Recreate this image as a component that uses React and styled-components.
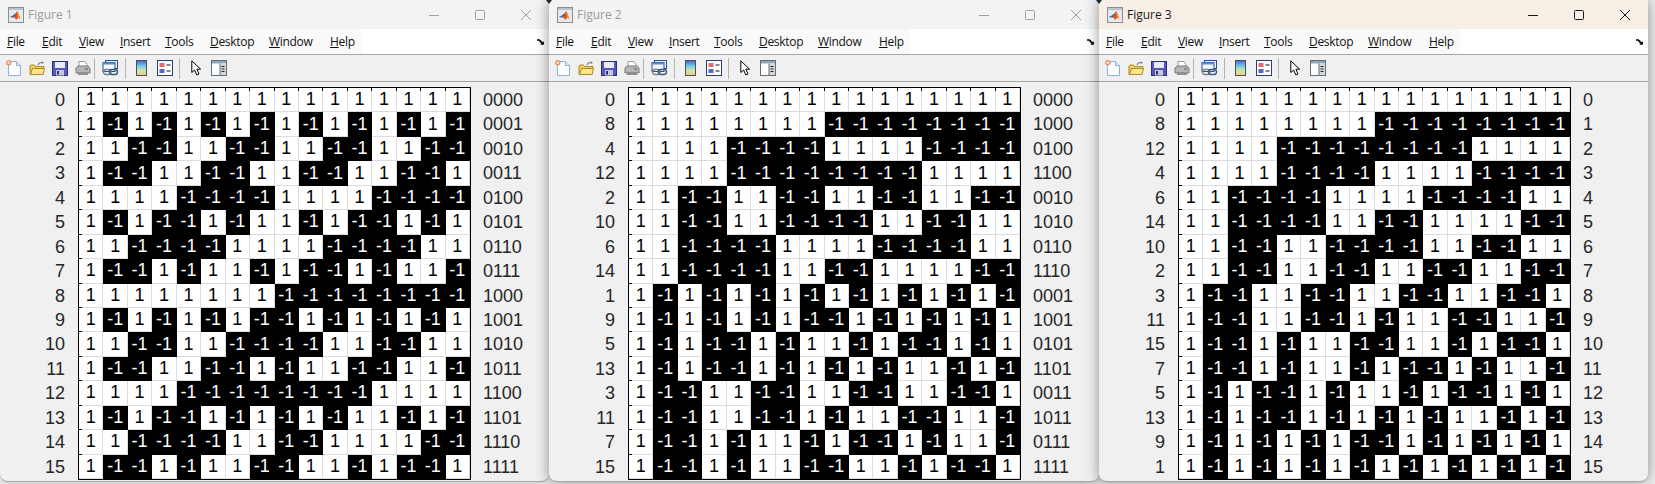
import React from "react";
import styled, { createGlobalStyle } from "styled-components";

const GlobalStyle = createGlobalStyle`
  html, body {
    margin: 0;
    padding: 0;
    background: #eeeff0;
  }
`;

const MENU = ["File", "Edit", "View", "Insert", "Tools", "Desktop", "Window", "Help"];
const pad = (n) => n.toString(2).padStart(4, "0");
const bits = (n) => n.toString(2).replace(/0/g, "").length;
const walsh = (i, j) => (bits(i & j) % 2 ? -1 : 1);

const NATURAL = [0, 1, 2, 3, 4, 5, 6, 7, 8, 9, 10, 11, 12, 13, 14, 15];
const DYADIC = [0, 8, 4, 12, 2, 10, 6, 14, 1, 9, 5, 13, 3, 11, 7, 15];
const SEQUENCY = [0, 8, 12, 4, 6, 14, 10, 2, 3, 11, 15, 7, 5, 13, 9, 1];

const FIGURES = [
  { id: 1, width: 549, labelW: 65, rows: NATURAL, right: (r) => pad(r) },
  { id: 2, width: 550, labelW: 66, rows: DYADIC, right: (r) => pad(r) },
  { id: 3, width: 549, labelW: 66, rows: SEQUENCY, right: (r, idx) => String(idx), active: true },
];

const Desktop = styled.div`
  display: flex;
  align-items: flex-start;
  width: 1655px;
  height: 484px;
  overflow: hidden;
  font-family: "Liberation Sans", Arial, sans-serif;
`;
const Win = styled.div`
  position: relative;
  z-index: ${(p) => p.$z};
  flex: none;
  display: flex;
  flex-direction: column;
  width: ${(p) => p.$w}px;
  height: 482px;
  box-sizing: border-box;
  background: #f0f0f0;
  border-bottom: 1px solid #a8a8a8;
  border-radius: 0 0 8px 8px;
  box-shadow: ${(p) => (p.$first ? "0 0 6px rgba(0,0,0,.25)" : "0 0 14px rgba(0,0,0,.42)")};
`;
const TitleBar = styled.div`
  display: flex;
  align-items: center;
  height: 29px;
  flex: none;
  padding-left: 8px;
  background: ${(p) => (p.$active ? "#f7efe6" : "#f3f3f3")};
`;
const TitleText = styled.span`
  margin-left: 4px;
  font-family: "Open Sans", sans-serif;
  font-size: 12px;
  color: ${(p) => (p.$active ? "#1a1a1a" : "#9a9a9a")};
`;
const Controls = styled.div`
  margin-left: auto;
  display: flex;
  align-items: center;
  padding-right: 18px;
  gap: 36px;
`;
const MenuBar = styled.div`
  display: flex;
  align-items: center;
  justify-content: space-between;
  height: 25px;
  flex: none;
  background: #fff;
  border-bottom: 1px solid #a6a6a6;
`;
const MenuList = styled.div`
  display: grid;
  grid-template-columns: 35px 37px 41px 45px 45px 59px 61px 31px;
  align-items: center;
  height: 100%;
  padding-left: 7px;
  background: #f9f9f9;
`;
const MenuItem = styled.span`
  font-family: "Open Sans", sans-serif;
  font-size: 12px;
  color: #111;
  letter-spacing: -0.3px;
  &::first-letter {
    text-decoration: underline;
  }
`;
const DockIcon = styled.svg`
  margin-right: 4px;
`;
const ToolBar = styled.div`
  display: flex;
  align-items: center;
  height: 26px;
  flex: none;
  padding-left: 2px;
  background: #f0f0f0;
  border-bottom: 1px solid #a6a6a6;
`;
const ToolSlot = styled.div`
  width: ${(p) => p.$w || 23}px;
  display: flex;
  justify-content: center;
`;
const ToolSep = styled.div`
  width: 1px;
  height: 21px;
  margin: 0 ${(p) => p.$r}px 0 ${(p) => p.$l}px;
  background: #b4b4b4;
`;
const Content = styled.div`
  display: flex;
  padding-top: 5px;
`;
const RowLabels = styled.div`
  display: grid;
  grid-template-rows: repeat(16, 24.44px);
  width: ${(p) => p.$w}px;
  margin-right: 13px;
  margin-top: 1px;
  text-align: right;
`;
const SideLabels = styled.div`
  display: grid;
  grid-template-rows: repeat(16, 24.44px);
  margin-left: 12px;
  margin-top: 1px;
`;
const Label = styled.div`
  font-size: 18px;
  line-height: 24.44px;
  color: #262626;
`;
const Matrix = styled.div`
  display: grid;
  grid-template-columns: repeat(16, 24.44px);
  grid-template-rows: repeat(16, 24.44px);
  width: 391px;
  height: 391px;
  background: #fff;
  border: 1px solid #000;
`;
const Cell = styled.div`
  position: relative;
  display: flex;
  align-items: center;
  justify-content: center;
  box-sizing: border-box;
  font-size: 18px;
  background: ${(p) => (p.$neg ? "#000" : "#fff")};
  color: ${(p) => (p.$neg ? "#fff" : "#000")};
  border-right: 1px solid ${(p) => (p.$neg ? "#000" : "#dcdcdc")};
  border-bottom: 1px solid ${(p) => (p.$neg ? "#000" : "#dcdcdc")};
  ${(p) =>
    p.$top &&
    `&::before { content: ""; position: absolute; top: 0; right: -1px; width: 1px; height: 3px; background: #000; }`}
  ${(p) =>
    p.$left &&
    `&::after { content: ""; position: absolute; left: 0; bottom: -1px; width: 3px; height: 1px; background: #000; }`}
`;
const Notch = styled.div`
  position: absolute;
  top: 0;
  left: -3px;
  width: 0;
  height: 0;
  border-left: 3px solid transparent;
  border-right: 3px solid transparent;
  border-top: 4px solid #1c2a3a;
`;

const Logo = () => (
  <svg width="16" height="16" viewBox="0 0 16 16">
    <rect x="0.5" y="0.5" width="15" height="15" fill="#e6e9f0" stroke="#8d8d8d" />
    <rect x="1" y="1" width="14" height="2" fill="#b9c3d3" />
    <path d="M2 10l3-1.6 2-1.6L9.3 4 12.5 12 10.4 10.6 8.3 13 6.3 10.4z" fill="#e2561b" />
    <path d="M2 10l3-1.6 2-1.6 1 1.2-2 2.4z" fill="#2f6fb6" />
    <path d="M9.3 4l3.2 8-2.1-1.4L9.4 6.6z" fill="#f3a028" />
  </svg>
);
const MinGlyph = ({ c }) => (
  <svg width="10" height="10" viewBox="0 0 10 10">
    <path d="M0 5.5h10" stroke={c} fill="none" />
  </svg>
);
const MaxGlyph = ({ c }) => (
  <svg width="10" height="10" viewBox="0 0 10 10">
    <rect x="0.5" y="0.5" width="9" height="9" rx="1" stroke={c} fill="none" />
  </svg>
);
const CloseGlyph = ({ c }) => (
  <svg width="10" height="10" viewBox="0 0 10 10">
    <path d="M0 0l10 10M10 0L0 10" stroke={c} fill="none" />
  </svg>
);
const NewIcon = () => (
  <svg width="16" height="16" viewBox="0 0 16 16">
    <path d="M2.5 1.5h8l4 4v10h-12z" fill="#fdfeff" stroke="#8fb0d8" />
    <path d="M10.5 1.5v4h4" fill="#dbe8f6" stroke="#8fb0d8" />
    <circle cx="2.8" cy="2.8" r="2.2" fill="#fbd9b8" stroke="#e2703a" />
  </svg>
);
const OpenIcon = () => (
  <svg width="16" height="16" viewBox="0 0 16 16">
    <path d="M1 6V14.5H14L15 6.5H6.5L5.5 5H2z" fill="#f0cf62" stroke="#b08a25" />
    <path d="M1.5 14.5L3.5 8.5H15.5L14 14.5z" fill="#fbe68e" stroke="#b08a25" />
    <path d="M9 5C10 2.5 12 2 14 3" fill="none" stroke="#7f8b9b" strokeWidth="1.2" />
    <path d="M13 1l2 2-2.5 1z" fill="#7f8b9b" />
  </svg>
);
const SaveIcon = () => (
  <svg width="16" height="16" viewBox="0 0 16 16">
    <rect x="0.5" y="1.5" width="15" height="14" fill="#5558b8" stroke="#2c2f80" />
    <rect x="3" y="2" width="10" height="6" fill="#e9ebf7" />
    <rect x="4" y="10" width="8" height="5.5" fill="#c6c8d2" />
    <rect x="5" y="11" width="2" height="3.5" fill="#2c2f80" />
  </svg>
);
const PrintIcon = () => (
  <svg width="16" height="16" viewBox="0 0 16 16">
    <path d="M4 1.5h6l2 3v3H4z" fill="#fff" stroke="#9a9a9a" />
    <path d="M1 8l2-2h10l2 2v5H1z" fill="#b5b5b5" stroke="#7a7a7a" />
    <rect x="3" y="12" width="10" height="3" fill="#8f8f8f" />
    <rect x="10" y="8.5" width="3" height="1" fill="#5d5d5d" />
  </svg>
);
const LinkIcon = () => (
  <svg width="17" height="16" viewBox="0 0 17 16">
    <rect x="3.5" y="0.5" width="12" height="8" fill="#eef3fa" stroke="#1f4f8f" />
    <rect x="1" y="2.5" width="12" height="9" fill="#f5f8fc" stroke="#1f4f8f" />
    <rect x="1" y="2.5" width="12" height="2" fill="#5f8cc4" />
    <rect x="1.5" y="9.5" width="7.5" height="5" rx="2.4" fill="none" stroke="#77808c" strokeWidth="1.4" />
    <rect x="7.5" y="9.5" width="8" height="5" rx="2.4" fill="none" stroke="#3d5a80" strokeWidth="1.4" />
  </svg>
);
const ColorbarIcon = ({ id }) => (
  <svg width="11" height="16" viewBox="0 0 11 16">
    <defs>
      <linearGradient id={id} x1="0" y1="0" x2="0" y2="1">
        <stop offset="0" stopColor="#4a5fd8" />
        <stop offset="0.35" stopColor="#6ec6e8" />
        <stop offset="0.65" stopColor="#c8e8a8" />
        <stop offset="1" stopColor="#f6c88e" />
      </linearGradient>
    </defs>
    <rect x="0.5" y="0.5" width="10" height="15" fill={`url(#${id})`} stroke="#44505f" />
  </svg>
);
const LegendIcon = () => (
  <svg width="16" height="16" viewBox="0 0 16 16">
    <rect x="0.5" y="0.5" width="15" height="15" fill="#fff" stroke="#2a3f7a" />
    <rect x="2.5" y="3" width="5" height="4" fill="#e8686c" />
    <rect x="2.5" y="9" width="5" height="4" fill="#5a62d8" />
    <path d="M9.5 5h4M9.5 11h4" stroke="#111" />
  </svg>
);
const CursorIcon = () => (
  <svg width="11" height="16" viewBox="0 0 11 16">
    <path d="M0.8 0.8V12.5L3.6 10 5.8 15 8 14 5.9 9.2H9.6z" fill="#fff" stroke="#000" />
  </svg>
);
const PanelIcon = () => (
  <svg width="16" height="16" viewBox="0 0 16 16">
    <rect x="0.5" y="0.5" width="15" height="15" fill="#fff" stroke="#5d6f7c" />
    <rect x="1" y="1" width="14" height="2.5" fill="#8ea7bb" />
    <rect x="9" y="3.5" width="6" height="11.5" fill="#d8d8d8" />
    <path d="M9 3.5v12" stroke="#5d6f7c" />
    <path d="M10.5 6.5h3M10.5 9h3M10.5 11.5h3" stroke="#222" />
  </svg>
);
const Dock = () => (
  <DockIcon width="8" height="7" viewBox="0 0 11 9">
    <path d="M0 1.5h3.5L8 5.5 9.5 4v5H4.5L6 7.5 2.5 3.5H0z" fill="#000" />
  </DockIcon>
);

const Figure = ({ fig, z }) => {
  const glyph = fig.active ? "#1a1a1a" : "#a0a0a0";
  return (
    <Win $w={fig.width} $z={z} $first={fig.id === 1}>
      {fig.id > 1 && <Notch />}
      <TitleBar $active={fig.active}>
        <Logo />
        <TitleText $active={fig.active}>Figure {fig.id}</TitleText>
        <Controls>
          <MinGlyph c={glyph} />
          <MaxGlyph c={glyph} />
          <CloseGlyph c={glyph} />
        </Controls>
      </TitleBar>
      <MenuBar>
        <MenuList>
          {MENU.map((m) => (
            <MenuItem key={m}>{m}</MenuItem>
          ))}
        </MenuList>
        <Dock />
      </MenuBar>
      <ToolBar>
        <ToolSlot><NewIcon /></ToolSlot>
        <ToolSlot><OpenIcon /></ToolSlot>
        <ToolSlot><SaveIcon /></ToolSlot>
        <ToolSlot><PrintIcon /></ToolSlot>
        <ToolSep $l={0} $r={4} />
        <ToolSlot><LinkIcon /></ToolSlot>
        <ToolSep $l={3} $r={4} />
        <ToolSlot><ColorbarIcon id={`cbar${fig.id}`} /></ToolSlot>
        <ToolSlot><LegendIcon /></ToolSlot>
        <ToolSep $l={3} $r={6} />
        <ToolSlot $w={21}><CursorIcon /></ToolSlot>
        <ToolSlot><PanelIcon /></ToolSlot>
      </ToolBar>
      <Content>
        <RowLabels $w={fig.labelW}>
          {fig.rows.map((r) => (
            <Label key={r}>{r}</Label>
          ))}
        </RowLabels>
        <Matrix>
          {fig.rows.map((r, idx) =>
            NATURAL.map((c) => {
              const v = walsh(r, c);
              return (
                <Cell key={c} $neg={v < 0} $top={idx === 0 && c < 15} $left={c === 0 && idx < 15}>
                  {v}
                </Cell>
              );
            })
          )}
        </Matrix>
        <SideLabels>
          {fig.rows.map((r, idx) => (
            <Label key={r}>{fig.right(r, idx)}</Label>
          ))}
        </SideLabels>
      </Content>
    </Win>
  );
};

export default function App() {
  return (
    <>
      <GlobalStyle />
      <Desktop>
        {FIGURES.map((fig, i) => (
          <Figure key={fig.id} fig={fig} z={i + 1} />
        ))}
      </Desktop>
    </>
  );
}
